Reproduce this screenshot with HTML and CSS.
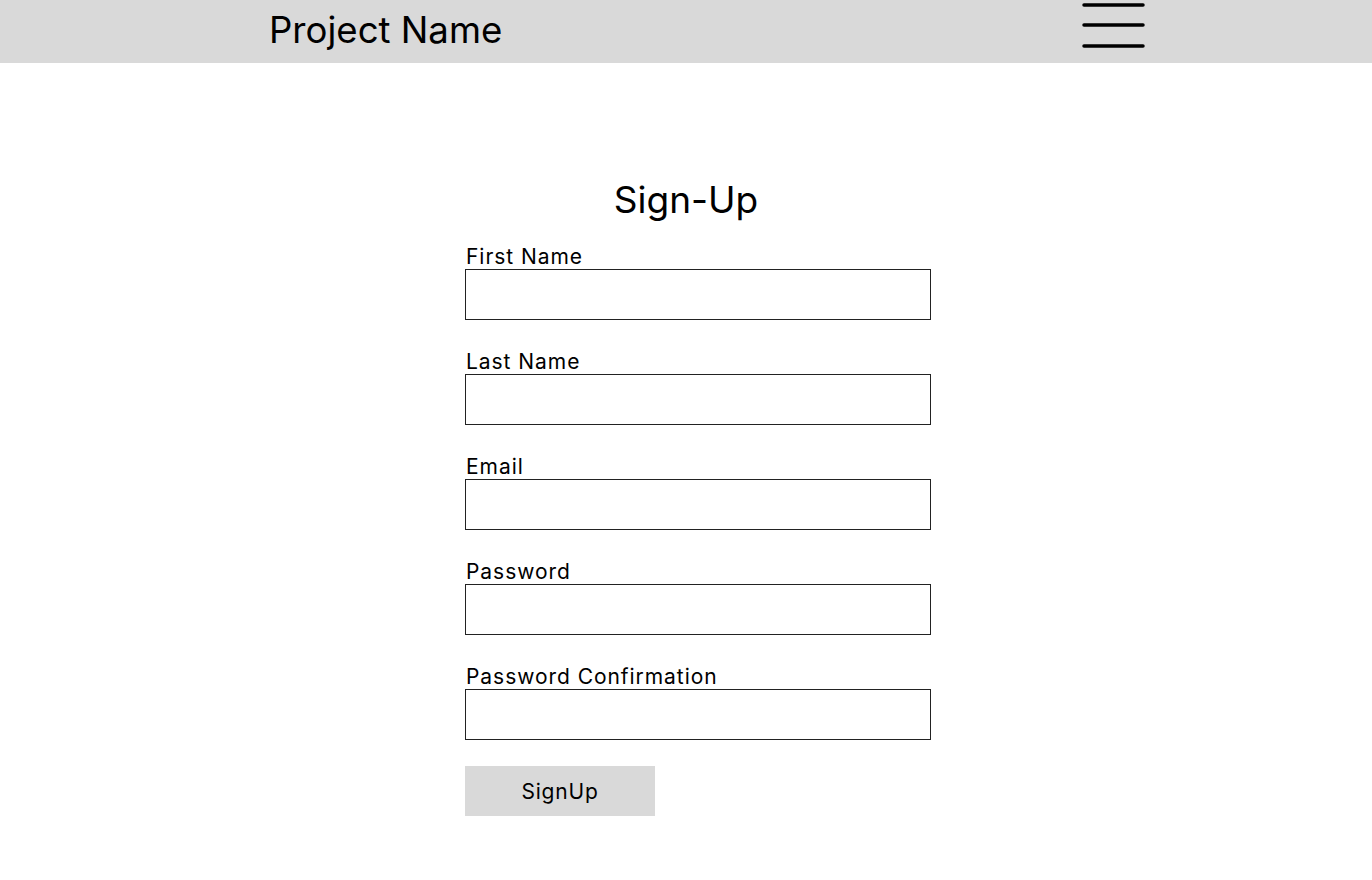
FILE: index.html
```html
<!DOCTYPE html>
<html lang="en">
<head>
<meta charset="utf-8">
<title>Sign-Up</title>
<link rel="stylesheet" href="styles.css">
</head>
<body>
<header class="topbar">
  <div class="brand">Project Name</div>
  <button class="menu" aria-label="Menu">
    <svg width="64" height="48" viewBox="0 0 64 48">
      <g stroke="#000" stroke-width="3.5" stroke-linecap="round">
        <line x1="2" y1="5" x2="61" y2="5"/>
        <line x1="2" y1="25" x2="61" y2="25"/>
        <line x1="2" y1="46" x2="61" y2="46"/>
      </g>
    </svg>
  </button>
</header>
<main class="page">
  <h1 class="title">Sign-Up</h1>
  <form class="form">
    <div class="field">
      <label class="label">First Name</label>
      <input class="input" type="text">
    </div>
    <div class="field">
      <label class="label">Last Name</label>
      <input class="input" type="text">
    </div>
    <div class="field">
      <label class="label">Email</label>
      <input class="input" type="email">
    </div>
    <div class="field">
      <label class="label">Password</label>
      <input class="input" type="password">
    </div>
    <div class="field">
      <label class="label">Password Confirmation</label>
      <input class="input" type="password">
    </div>
    <button class="submit" type="button">SignUp</button>
  </form>
</main>
</body>
</html>
```

FILE: styles.css
```css
* { box-sizing: border-box; }
html, body {
  margin: 0;
  padding: 0;
  background: #fff;
  color: #000;
  font-family: Inter, "Noto Sans", sans-serif;
}
.topbar {
  height: 63px;
  background: #d9d9d9;
  display: flex;
  align-items: flex-start;
  justify-content: space-between;
  padding: 0 226px 0 269px;
}
.brand {
  font-size: 36.6px;
  line-height: 60px;
}
.menu {
  border: 0;
  background: none;
  padding: 0;
  margin: 0;
  display: block;
  cursor: pointer;
}
.menu svg { display: block; }
.page {
  display: flex;
  flex-direction: column;
  padding-top: 114px;
}
.title {
  margin: 0;
  font-weight: 400;
  font-size: 37px;
  line-height: 46px;
  text-align: center;
}
.form {
  width: 466px;
  margin: 22px 0 0 465px;
  display: flex;
  flex-direction: column;
  gap: 30px;
}
.field {
  display: flex;
  flex-direction: column;
}
.label {
  font-size: 21px;
  line-height: 24px;
  letter-spacing: 0.95px;
  padding-left: 1px;
}
.input {
  height: 51px;
  width: 466px;
  border: 1px solid #222;
  border-radius: 0;
  margin: 0;
  padding: 0 10px;
  font: inherit;
  background: #fff;
}
.submit {
  width: 190px;
  height: 50px;
  border: 0;
  background: #d9d9d9;
  font-family: inherit;
  font-size: 21px;
  letter-spacing: 0.8px;
  color: #000;
  margin-top: -4px;
  padding: 0;
}
```
